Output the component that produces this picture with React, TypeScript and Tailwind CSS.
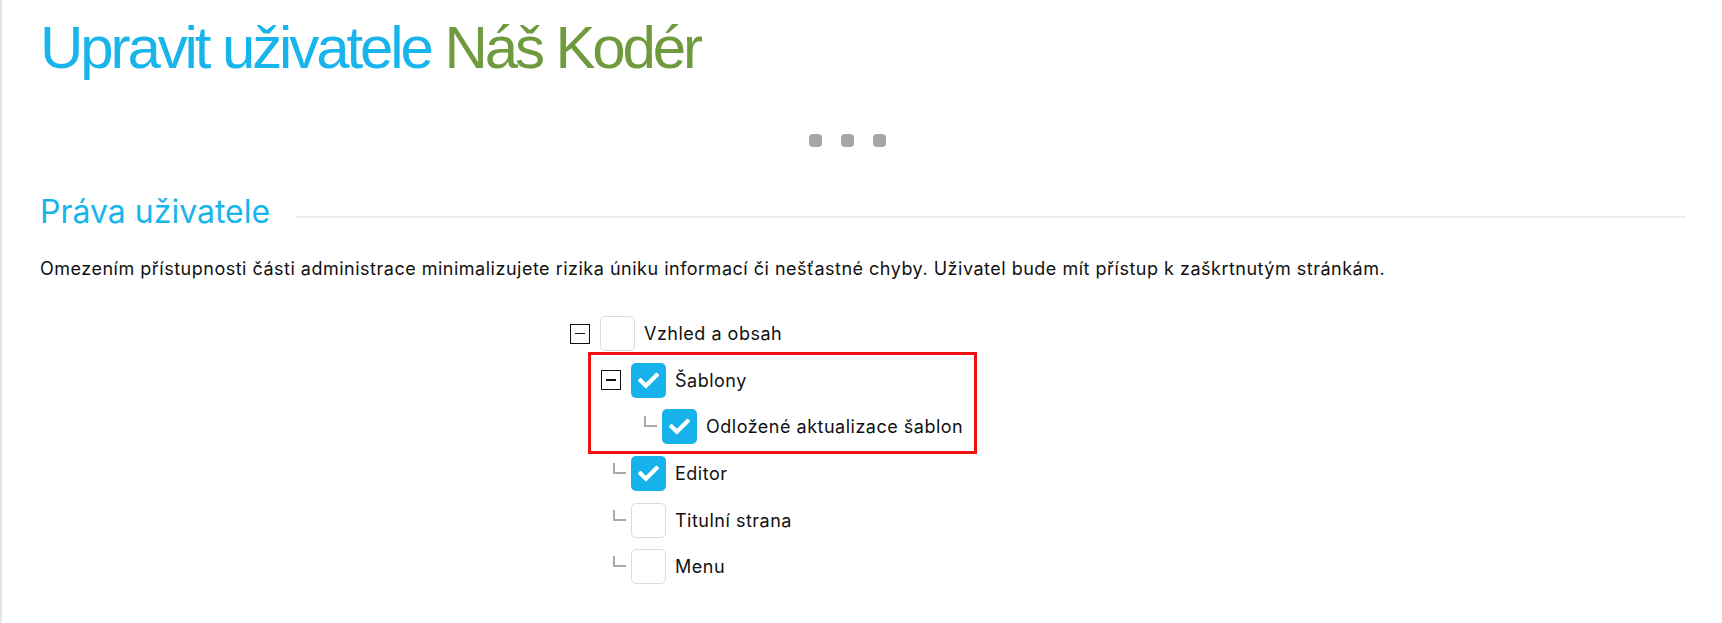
import { FaCheck } from "react-icons/fa";

type Node = {
  label: string;
  level: number;
  checked: boolean;
  expanded?: boolean;
};

const nodes: Node[] = [
  { label: "Vzhled a obsah", level: 0, checked: false, expanded: true },
  { label: "Šablony", level: 1, checked: true, expanded: true },
  { label: "Odložené aktualizace šablon", level: 2, checked: true },
  { label: "Editor", level: 1, checked: true },
  { label: "Titulní strana", level: 1, checked: false },
  { label: "Menu", level: 1, checked: false },
];

const indents = ["pl-0", "pl-[31px]", "pl-[62px]"];

const TreeRow = ({ node }: { node: Node }) => {
  return (
    <div className={`flex h-[35px] items-center ${indents[node.level]}`}>
      <div className="flex h-[35px] w-[30px] shrink-0 items-center">
        {node.expanded ? (
          <div className="flex h-[20px] w-[20px] items-center justify-center border border-[#111]">
            <div className="h-[1.5px] w-[10px] bg-[#111]" />
          </div>
        ) : (
          <div className="mt-[-10px] ml-[12px] h-[11px] w-[13px] border-b-2 border-l-2 border-[#aaaaaa]" />
        )}
      </div>
      {node.checked ? (
        <div className="flex h-[35px] w-[35px] shrink-0 items-center justify-center rounded-[5px] bg-[#17b2ec]">
          <FaCheck className="h-[21px] w-[21px] text-white" />
        </div>
      ) : (
        <div className="h-[35px] w-[35px] shrink-0 rounded-[5px] border border-[#dcdcdc] bg-white" />
      )}
      <span className="ml-[9px] text-[18px] tracking-[0.5px] text-[#111]">{node.label}</span>
    </div>
  );
};

export default function App() {
  return (
    <div className="min-h-screen border-l-2 border-[#e6e6e6] bg-white font-['Inter',sans-serif]">
      <div className="pt-[18px] pr-[36px] pl-[38px]">
        <h1 className="font-['Liberation_Sans',Arial,sans-serif] text-[60px] leading-[60px] font-normal tracking-[-3.1px]">
          <span className="text-[#18b4ec]">Upravit uživatele</span>{" "}
          <span className="text-[#6f9a3e]">Náš Kodér</span>
        </h1>

        <div className="mt-[56px] ml-[769px] flex gap-[19px]">
          <div className="h-[13px] w-[13px] rounded-[4px] bg-[#a6a6a6]" />
          <div className="h-[13px] w-[13px] rounded-[4px] bg-[#a6a6a6]" />
          <div className="h-[13px] w-[13px] rounded-[4px] bg-[#a6a6a6]" />
        </div>

        <div className="mt-[45px] flex items-start">
          <h2 className="text-[32px] leading-[40px] font-normal text-[#18b4ec]">Práva uživatele</h2>
          <div className="mt-[24px] ml-[26px] h-[2px] flex-1 bg-[#eeeeee]" />
        </div>

        <p className="mt-[24px] text-[18px] leading-[26px] tracking-[0.5px] text-[#111]">
          Omezením přístupnosti části administrace minimalizujete rizika úniku informací či nešťastné chyby. Uživatel bude mít přístup k zaškrtnutým stránkám.
        </p>

        <div className="relative mt-[34px] ml-[530px] flex w-fit flex-col gap-[11.7px]">
          {nodes.map((n) => (
            <TreeRow key={n.label} node={n} />
          ))}
          <div className="pointer-events-none absolute top-[36px] left-[18px] h-[102px] w-[389px] border-[3px] border-[#ee1111]" />
        </div>
      </div>
    </div>
  );
}
